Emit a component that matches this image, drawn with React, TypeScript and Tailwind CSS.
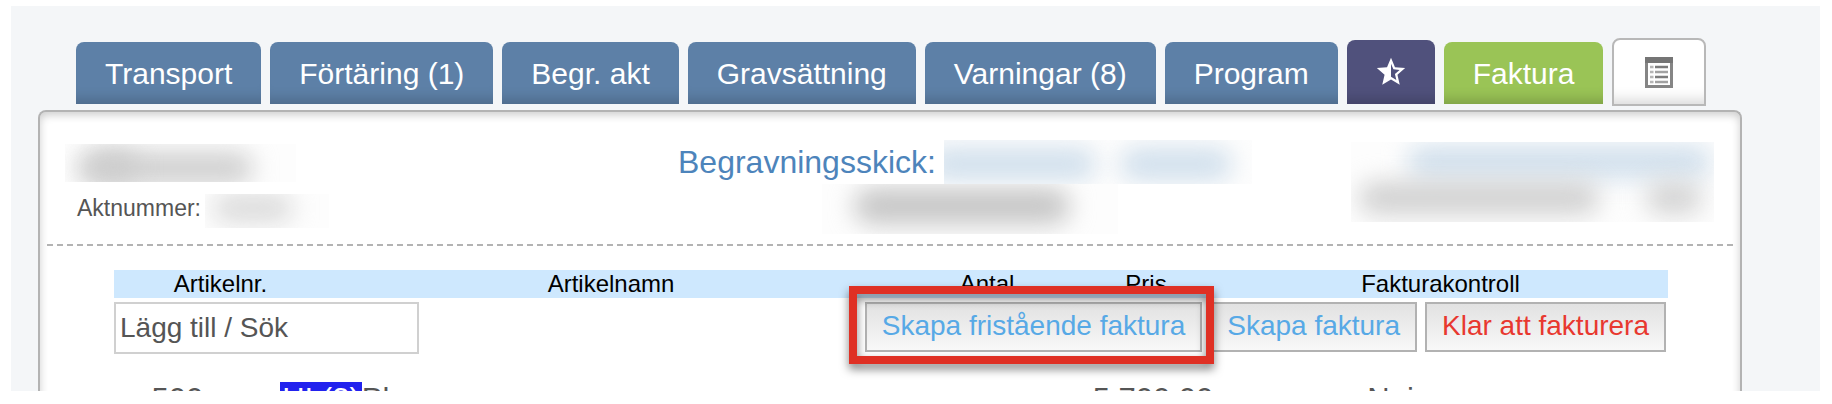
import React from 'react';
import { MdStarHalf } from 'react-icons/md';

const tabs = ['Transport', 'Förtäring (1)', 'Begr. akt', 'Gravsättning', 'Varningar (8)', 'Program'];

const tabBase = 'mb-0.5 flex items-center justify-center rounded-t-lg text-white whitespace-nowrap shadow-[inset_0_-16px_14px_-12px_rgba(0,0,0,0.2)]';

function ListIcon() {
  return (
    <svg width="28" height="31" viewBox="0 0 28 31" fill="none" aria-hidden="true">
      <rect x="1.500" y="1.500" width="25" height="28" fill="#fff" stroke="#858585" strokeWidth="3" />
      <rect x="0" y="0" width="28" height="6" fill="#757575" />
      <g strokeWidth="2.500">
        <path d="M10 10h13M10 20h13" stroke="#7c7c7c" />
        <path d="M10 15h13M10 25h13" stroke="#a2a2a2" />
        <path d="M5 10h3.500M5 15h3.500M5 20h3.500M5 25h3.500" stroke="#b5b5b5" />
      </g>
    </svg>
  );
}

function Smudge({ className = '' }: { className?: string }) {
  return <span className={`absolute rounded-full blur-[12px] ${className}`} />;
}

function Masked({ children, className = '' }: { children: React.ReactNode; className?: string }) {
  return <div className={`relative overflow-hidden bg-[#fdfdfd] ${className}`}>{children}</div>;
}

function ActionButton({ children, className = 'text-[#57a9e6]' }: { children: React.ReactNode; className?: string }) {
  return (
    <button
      type="button"
      className={`border-2 border-[#b2b2b2] bg-linear-to-b from-[#e2e2e2] to-[#f8f8f8] px-[15px] pt-0.5 pb-1 text-[28px] leading-10 whitespace-nowrap ${className}`}
    >
      {children}
    </button>
  );
}

function CaseHeader() {
  return (
    <header className="mx-[7px] grid h-[134px] grid-cols-[613fr_673fr_363fr] border-b-2 border-dashed border-[#b3b3b3] pr-[19px] pl-[18px]">
      <div className="pt-8">
        <Masked className="h-[38px] w-[231px]">
          <Smudge className="top-2 left-3 h-8 w-44 bg-[#cfcfcf]" />
          <Smudge className="top-2 left-6 h-7 w-12 bg-[#cccccc]" />
        </Masked>
        <div className="mt-3 flex items-start gap-1 pl-3 text-[23px] leading-7 text-[#555]">
          <span>Aktnummer:</span>
          <Masked className="h-[34px] w-[124px]">
            <Smudge className="top-0 left-2 h-7 w-20 bg-[#dadada]" />
          </Masked>
        </div>
      </div>

      <div className="pt-7">
        <div className="flex items-start gap-2">
          <span className="text-[32px] leading-11 text-[#4d84bb]">Begravningsskick:</span>
          <Masked className="h-11 w-[308px]">
            <Smudge className="top-2 -left-4 h-8 w-42 bg-[#d0dfec]" />
            <Smudge className="top-2 left-44 h-8 w-28 bg-[#d0dfec]" />
          </Masked>
        </div>
        <Masked className="ml-[144px] h-[50px] w-[296px]">
          <Smudge className="top-1 left-8 h-9 w-54 bg-[#c6c6c6]" />
        </Masked>
      </div>

      <div className="pt-[30px]">
        <Masked className="h-20">
          <Smudge className="top-1 left-14 h-8 w-76 bg-[#d0dfec]" />
          <Smudge className="top-10 left-2 h-8 w-60 bg-[#d0d0d0]" />
          <Smudge className="top-10 right-3 h-8 w-14 bg-[#d3d3d3]" />
        </Masked>
      </div>
    </header>
  );
}

function Articles() {
  return (
    <section className="mt-6 mr-[72px] ml-[74px]">
      <table className="w-full table-fixed border-collapse">
        <thead>
          <tr className="bg-[#cee8fe] text-[24px] leading-7 text-black [&>th]:p-0 [&>th]:font-normal">
            <th className="w-[213px]">Artikelnr.</th>
            <th className="w-[568px]">Artikelnamn</th>
            <th className="w-[184px]">Antal</th>
            <th className="w-[134px]">Pris</th>
            <th>Fakturakontroll</th>
          </tr>
        </thead>
      </table>

      <div className="mt-1 flex items-start justify-between pr-0.5">
        <input
          type="text"
          aria-label="Lägg till / Sök"
          placeholder="Lägg till / Sök"
          className="h-13 w-[305px] border-2 border-[#d0d0d0] bg-white px-1 text-[28px] text-[#555] outline-none placeholder:text-[#555]"
        />
        <div className="flex gap-2">
          <div className="relative flex">
            <ActionButton>Skapa fristående faktura</ActionButton>
            <span className="pointer-events-none absolute -top-4 -right-3 -bottom-3 -left-4 z-10 border-8 border-[#df3024] drop-shadow-[0_5px_5px_rgba(0,0,0,0.5)]" />
          </div>
          <ActionButton>Skapa faktura</ActionButton>
          <ActionButton className="text-[#e8382f]">Klar att fakturera</ActionButton>
        </div>
      </div>

      <table className="mt-[26px] w-full table-fixed border-collapse text-[31px] leading-10 text-[#555]">
        <tbody>
          <tr className="[&>td]:p-0 [&>td]:whitespace-nowrap">
            <td className="w-[6%] pr-1! text-right">500</td>
            <td className="w-[53%] pl-[73px]!">
              <mark className="inline-block bg-[#2222ee] px-0.5 leading-9 text-white">HI (3)</mark>Pl
            </td>
            <td className="w-[12%] pr-1! text-right">5 700,00</td>
            <td className="w-[29%] pl-[150px]!">Nej</td>
          </tr>
        </tbody>
      </table>
    </section>
  );
}

export default function App() {
  return (
    <div className="h-screen bg-white pt-1.5 pr-3 pb-[13px] pl-[11px] font-['Liberation_Sans',Arial,sans-serif]">
      <main className="flex h-full flex-col overflow-hidden bg-[#f4f6f8] pt-8">
        <nav className="ml-[65px] flex shrink-0 items-end gap-[9px] text-[30px]">
          {tabs.map((tab) => (
            <button key={tab} type="button" className={`${tabBase} h-[62px] bg-[#5d80a7] px-[29px]`}>
              {tab}
            </button>
          ))}
          <button type="button" aria-label="Favoriter" className={`${tabBase} h-16 w-[88px] bg-[#50517c]`}>
            <MdStarHalf size={34} />
          </button>
          <button type="button" className={`${tabBase} h-[62px] bg-[#9ac456] px-[29px]`}>
            Faktura
          </button>
          <button
            type="button"
            aria-label="Lista"
            className="flex h-17 w-[94px] items-center justify-center rounded-t-lg border-2 border-[#b8b8b8] bg-white shadow-[inset_0_-16px_14px_-12px_rgba(0,0,0,0.16)]"
          >
            <ListIcon />
          </button>
        </nav>

        <div className="mt-1 mr-[78px] ml-[27px] shrink-0 rounded-t-lg border-2 border-b-0 border-[#b3b3b3] bg-white shadow-[inset_0_3px_8px_rgba(0,0,0,0.2)]">
          <CaseHeader />
          <Articles />
        </div>
      </main>
    </div>
  );
}
